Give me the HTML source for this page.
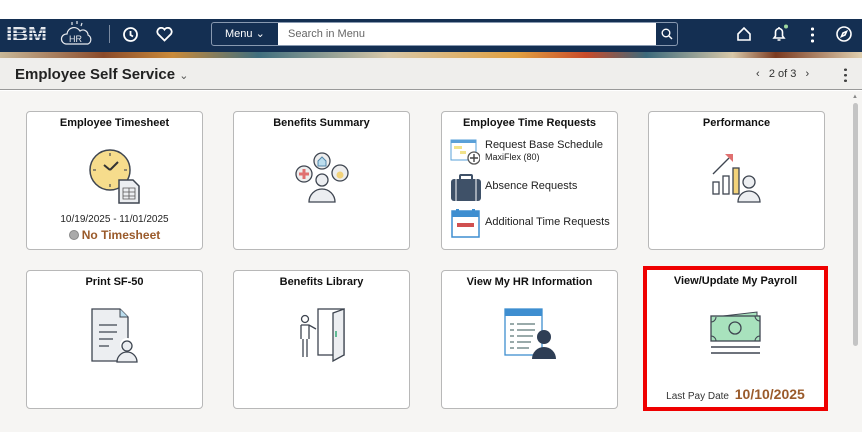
<!DOCTYPE html>
<html><head><meta charset="utf-8"><style>
*{box-sizing:border-box;margin:0;padding:0}
body{width:862px;height:432px;overflow:hidden;background:#fff;font-family:"Liberation Sans",Arial,sans-serif;position:relative}
.hdr{position:absolute;top:19px;left:0;width:862px;height:33px;background:#142f52}
.band{position:absolute;top:52px;left:0;width:862px;height:6px;background:linear-gradient(90deg,#c8b898 0%,#8a4a2a 12%,#c98a3a 20%,#3f6e7e 30%,#d8c8a8 45%,#e0a040 60%,#c84a2a 68%,#3c6a7c 75%,#d8c8a8 85%,#7a3a20 90%,#e0d0b0 100%)}
.bar{position:absolute;top:58px;left:0;width:862px;height:32px;background:#efeeec;border-bottom:1px solid #999}
.main{position:absolute;top:91px;left:0;width:862px;height:341px;background:#f6f5f3}
.tile{position:absolute;width:177px;height:139px;background:#fff;border:1px solid #b8b8b8;border-radius:4px}
.tile .t{position:absolute;top:5px;left:0;right:0;text-align:center;font-size:11px;font-weight:bold;color:#111}
.ic{position:absolute;left:50%;transform:translateX(-50%)}
</style></head><body>
<div class="hdr">
 <div style="position:absolute;left:6px;top:5px;font:bold 20px/22px 'Liberation Sans',sans-serif;color:#e6e9ee;letter-spacing:-0.5px;transform:scaleX(1.15);transform-origin:left">IBM</div>
 <div style="position:absolute;left:6px;top:8px;width:50px;height:16px;background:repeating-linear-gradient(transparent 0 2.5px,#142f52 2.5px 3.5px)"></div>
 <svg style="position:absolute;left:60px;top:1px" width="38" height="30" viewBox="0 0 38 30" fill="none" stroke="#e6e9ee" stroke-width="1.2"><path d="M6 24a5 5 0 0 1 1-10 7 7 0 0 1 13-3 5 5 0 0 1 8 4 5 5 0 0 1 0 9z"/><path d="M12 2v3M17 1v3M22 3l-1 3"/><text x="9" y="22" font-size="9" fill="#e6e9ee" stroke="none" font-family="Liberation Sans">HR</text></svg>
 <div style="position:absolute;left:109px;top:6px;width:1px;height:18px;background:#7a8aa0"></div>
 <svg style="position:absolute;left:122px;top:7px" width="17" height="17" viewBox="0 0 17 17" fill="none" stroke="#fff" stroke-width="1.8"><circle cx="8.5" cy="8.5" r="6.5"/><path d="M8.5 5v4l2.5 1.5"/></svg>
 <svg style="position:absolute;left:156px;top:8px" width="17" height="15" viewBox="0 0 17 15" fill="none" stroke="#fff" stroke-width="1.8"><path d="M8.5 13.5 2 7A3.6 3.6 0 0 1 8.5 2.5 3.6 3.6 0 0 1 15 7z"/></svg>
 <div style="position:absolute;left:211px;top:3px;width:467px;height:24px;border:1px solid #8899b0;border-radius:3px;overflow:hidden">
  <div style="position:absolute;left:0;top:0;width:66px;height:22px;color:#fff;font-size:11px;line-height:22px;padding-left:13px">Menu &#8964;</div>
  <div style="position:absolute;left:66px;top:0;width:378px;height:22px;background:#fff;color:#666;font-size:11px;line-height:22px;padding-left:10px">Search in Menu</div>
  <svg style="position:absolute;left:449px;top:5px" width="12" height="12" viewBox="0 0 12 12" fill="none" stroke="#fff" stroke-width="1.4"><circle cx="5" cy="5" r="3.8"/><path d="M8 8l3 3"/></svg>
 </div>
 <svg style="position:absolute;left:736px;top:7px" width="16" height="16" viewBox="0 0 16 16" fill="none" stroke="#fff" stroke-width="1.6"><path d="M2 8 8 2l6 6v6H2z"/></svg>
 <svg style="position:absolute;left:771px;top:5px" width="18" height="19" viewBox="0 0 18 19" fill="none" stroke="#fff" stroke-width="1.6"><path d="M3 14h10l-1.5-2V8a3.5 3.5 0 0 0-7 0v4zM8 3v2M6.5 16h3"/><circle cx="15" cy="2.5" r="2" fill="#9fd89f" stroke="none"/></svg>
 <div style="position:absolute;left:811px;top:7px;width:3px;height:17px;background:radial-gradient(circle,#fff 1.5px,transparent 1.6px) 0 0/3px 6px repeat-y"></div>
 <svg style="position:absolute;left:835px;top:6px" width="18" height="18" viewBox="0 0 18 18" fill="none" stroke="#fff" stroke-width="1.6"><circle cx="9" cy="9" r="7"/><path d="M11.5 6.5 10 10l-3.5 1.5L8 8z"/></svg>
</div>
<div class="band"></div>
<div class="bar">
 <div style="position:absolute;left:15px;top:8px;font-size:15px;font-weight:bold;color:#222">Employee Self Service <span style="font-weight:normal;font-size:11px;color:#555">&#8964;</span></div>
 <div style="position:absolute;left:756px;top:10px;font-size:11px;color:#333">&lsaquo;&nbsp;&nbsp; 2 of 3 &nbsp;&nbsp;&rsaquo;</div>
 <div style="position:absolute;left:844px;top:9px;width:3px;height:15px;background:radial-gradient(circle,#444 1.4px,transparent 1.5px) 0 0/3px 5.5px repeat-y"></div>
</div>
<div class="main">
 <div style="position:absolute;left:853px;top:12px;width:5px;height:243px;background:#c4c4c4;border-radius:3px"></div>
 <div style="position:absolute;left:852px;top:3px;font-size:6px;color:#888">&#9650;</div>
</div>

<div class="tile" style="left:26px;top:111px"><div class="t">Employee Timesheet</div>
 <svg class="ic" style="top:36px" width="54" height="56" viewBox="0 0 54 56"><circle cx="22" cy="22" r="20" fill="#f6dc8c" stroke="#3e4550" stroke-width="1.5"/><path d="M22 5v3M22 36v3M5 22h3M36 22h3" stroke="#555" stroke-width="1.3"/><path d="M22 22l-6-5M22 22l8-8" stroke="#333" stroke-width="2"/><path d="M31 32h14l6 6v17H31z" fill="#eceef1" stroke="#3e4550" stroke-width="1.5"/><path d="M35 40h12v11H35zM35 44h12M35 48h12M41 40v11" stroke="#555" fill="none" stroke-width=".8"/></svg>
 <div style="position:absolute;top:102px;left:0;right:0;text-align:center;font-size:10px;color:#222">10/19/2025 - 11/01/2025</div>
 <div style="position:absolute;top:116px;left:0;right:0;text-align:center;font-size:12px;font-weight:bold;color:#9a5a2a"><span style="display:inline-block;width:10px;height:10px;border-radius:50%;background:#aaa;border:1px solid #888;vertical-align:-1px;margin-right:3px"></span>No Timesheet</div>
</div>
<div class="tile" style="left:233px;top:111px"><div class="t">Benefits Summary</div>
 <svg class="ic" style="top:40px" width="56" height="52" viewBox="0 0 56 52"><circle cx="10" cy="22" r="8" fill="#eee" stroke="#3e4550" stroke-width="1.3"/><path d="M10 17v10M5 22h10" stroke="#e07070" stroke-width="3"/><circle cx="28" cy="9" r="8" fill="#eee" stroke="#3e4550" stroke-width="1.3"/><path d="M24 14V9l4-4 4 4v5z" fill="#bde" stroke="#58a"/><circle cx="46" cy="21" r="8" fill="#eee" stroke="#3e4550" stroke-width="1.3"/><circle cx="46" cy="23" r="3.5" fill="#f3d37a"/><circle cx="28" cy="28" r="6" fill="#eceef1" stroke="#3e4550" stroke-width="1.3"/><path d="M15 50a13 13 0 0 1 26 0z" fill="#eceef1" stroke="#3e4550" stroke-width="1.3"/></svg>
</div>
<div class="tile" style="left:441px;top:111px"><div class="t">Employee Time Requests</div>
 <svg style="position:absolute;left:8px;top:27px" width="30" height="26" viewBox="0 0 30 26"><rect x="1" y="1" width="25" height="20" fill="#fff" stroke="#5aa0d8"/><rect x="1" y="1" width="25" height="3" fill="#5aa0d8"/><rect x="4" y="7" width="8" height="3" fill="#f2e38a"/><rect x="10" y="12" width="6" height="3" fill="#f2e38a"/><circle cx="24" cy="19" r="6" fill="#fff" stroke="#555" stroke-width="1.3"/><path d="M24 15v8M20 19h8" stroke="#444" stroke-width="1.4"/></svg>
 <div style="position:absolute;left:43px;top:27px;font-size:11px;color:#222">Request Base Schedule</div>
 <div style="position:absolute;left:43px;top:40px;font-size:9px;color:#222">MaxiFlex (80)</div>
 <svg style="position:absolute;left:8px;top:62px" width="32" height="28" viewBox="0 0 32 28"><rect x="1" y="5" width="30" height="22" rx="3" fill="#3f5168"/><rect x="10" y="1" width="12" height="6" rx="1" fill="none" stroke="#3f5168" stroke-width="2"/><path d="M6 5v22M26 5v22" stroke="#fff" stroke-width="1"/></svg>
 <div style="position:absolute;left:43px;top:68px;font-size:11px;color:#222">Absence Requests</div>
 <svg style="position:absolute;left:9px;top:96px" width="30" height="30" viewBox="0 0 30 30"><rect x="1" y="3" width="27" height="26" fill="#fff" stroke="#3e8ed0" stroke-width="1.5"/><rect x="1" y="3" width="27" height="6" fill="#3e8ed0"/><rect x="5" y="1" width="3" height="5" fill="#3e8ed0"/><rect x="21" y="1" width="3" height="5" fill="#3e8ed0"/><rect x="6" y="15" width="17" height="4" fill="#d05050"/></svg>
 <div style="position:absolute;left:43px;top:104px;font-size:11px;color:#222">Additional Time Requests</div>
</div>
<div class="tile" style="left:648px;top:111px"><div class="t">Performance</div>
 <svg class="ic" style="top:38px" width="56" height="54" viewBox="0 0 56 54"><rect x="4" y="32" width="6" height="12" fill="#fff" stroke="#3e4550" stroke-width="1.3"/><rect x="14" y="26" width="6" height="18" fill="#fff" stroke="#3e4550" stroke-width="1.3"/><rect x="24" y="18" width="6" height="26" fill="#f3d37a" stroke="#3e4550" stroke-width="1.3"/><path d="M4 24 20 8" stroke="#3e4550" stroke-width="1.3"/><path d="M16 4h8v8z" fill="#e07070"/><circle cx="40" cy="32" r="6" fill="#eceef1" stroke="#3e4550" stroke-width="1.3"/><path d="M29 52a11 11 0 0 1 22 0z" fill="#eceef1" stroke="#3e4550" stroke-width="1.3"/></svg>
</div>

<div class="tile" style="left:26px;top:270px"><div class="t">Print SF-50</div>
 <svg class="ic" style="top:36px" width="50" height="56" viewBox="0 0 50 56"><path d="M2 2h28l8 8v44H2z" fill="#eceef1" stroke="#3e4550" stroke-width="1.3"/><path d="M30 2v8h8" fill="#bde" stroke="#3e4550"/><path d="M9 18h18M9 25h18M9 32h14M9 39h10" stroke="#3e4550" stroke-width="1.3"/><circle cx="37" cy="38" r="7" fill="#fff"/><circle cx="37" cy="39" r="5" fill="#eceef1" stroke="#3e4550" stroke-width="1.3"/><path d="M27 55a10 10 0 0 1 20 0z" fill="#eceef1" stroke="#3e4550" stroke-width="1.3"/></svg>
</div>
<div class="tile" style="left:233px;top:270px"><div class="t">Benefits Library</div>
 <svg class="ic" style="top:36px" width="52" height="56" viewBox="0 0 52 56"><rect x="22" y="2" width="26" height="46" fill="#fff" stroke="#3e4550" stroke-width="1.3"/><path d="M37 6l11-4v46l-11 6z" fill="#eceef1" stroke="#3e4550" stroke-width="1.3"/><path d="M40 24v6" stroke="#3a7" stroke-width="1.5"/><circle cx="9" cy="12" r="3.5" fill="#fff" stroke="#3e4550" stroke-width="1.3"/><path d="M5 18h8l7 4M5 18v14M13 18v14M7 32v18M11 32v18" stroke="#3e4550" stroke-width="1.3" fill="none"/></svg>
</div>
<div class="tile" style="left:441px;top:270px"><div class="t">View My HR Information</div>
 <svg class="ic" style="top:36px" width="52" height="54" viewBox="0 0 52 54"><rect x="1" y="2" width="37" height="46" fill="#fff" stroke="#3e8ed0" stroke-width="1.3"/><rect x="1" y="2" width="37" height="7" fill="#3e8ed0"/><path d="M6 17h4M13 17h18M6 23h4M13 23h18M6 29h4M13 29h16M6 35h4M13 35h14M6 41h4M13 41h12" stroke="#9aa" stroke-width="2"/><circle cx="40" cy="30" r="7" fill="#2e3e55"/><path d="M28 52a12 12 0 0 1 24 0z" fill="#2e3e55"/></svg>
</div>
<div style="position:absolute;left:643px;top:266px;width:185px;height:145px;border:4px solid #ef0000"></div>
<div class="tile" style="left:647px;top:270px;width:177px;height:137px;border:none;border-radius:0"><div class="t">View/Update My Payroll</div>
 <svg class="ic" style="top:38px" width="54" height="50" viewBox="0 0 54 50"><path d="M14 8l34-4v4" fill="#a8e2bd" stroke="#3e4550" stroke-width="1"/><rect x="2" y="8" width="49" height="25" fill="#a8e2bd" stroke="#3e4550" stroke-width="1.3"/><circle cx="26" cy="20" r="6" fill="none" stroke="#3e4550" stroke-width="1.3"/><path d="M2 14a5 5 0 0 0 5-5M46 8a5 5 0 0 0 5 5M2 28a5 5 0 0 1 5 5M46 33a5 5 0 0 1 5-5" stroke="#3e4550" fill="none"/><path d="M2 39h49M2 45h49" stroke="#3e4550" stroke-width="1.5"/></svg>
 <div style="position:absolute;top:116px;left:0;right:0;text-align:center;color:#333;font-size:10px">Last Pay Date <span style="font-size:14px;font-weight:bold;color:#9a5a2a;margin-left:3px">10/10/2025</span></div>
</div>
</body></html>
